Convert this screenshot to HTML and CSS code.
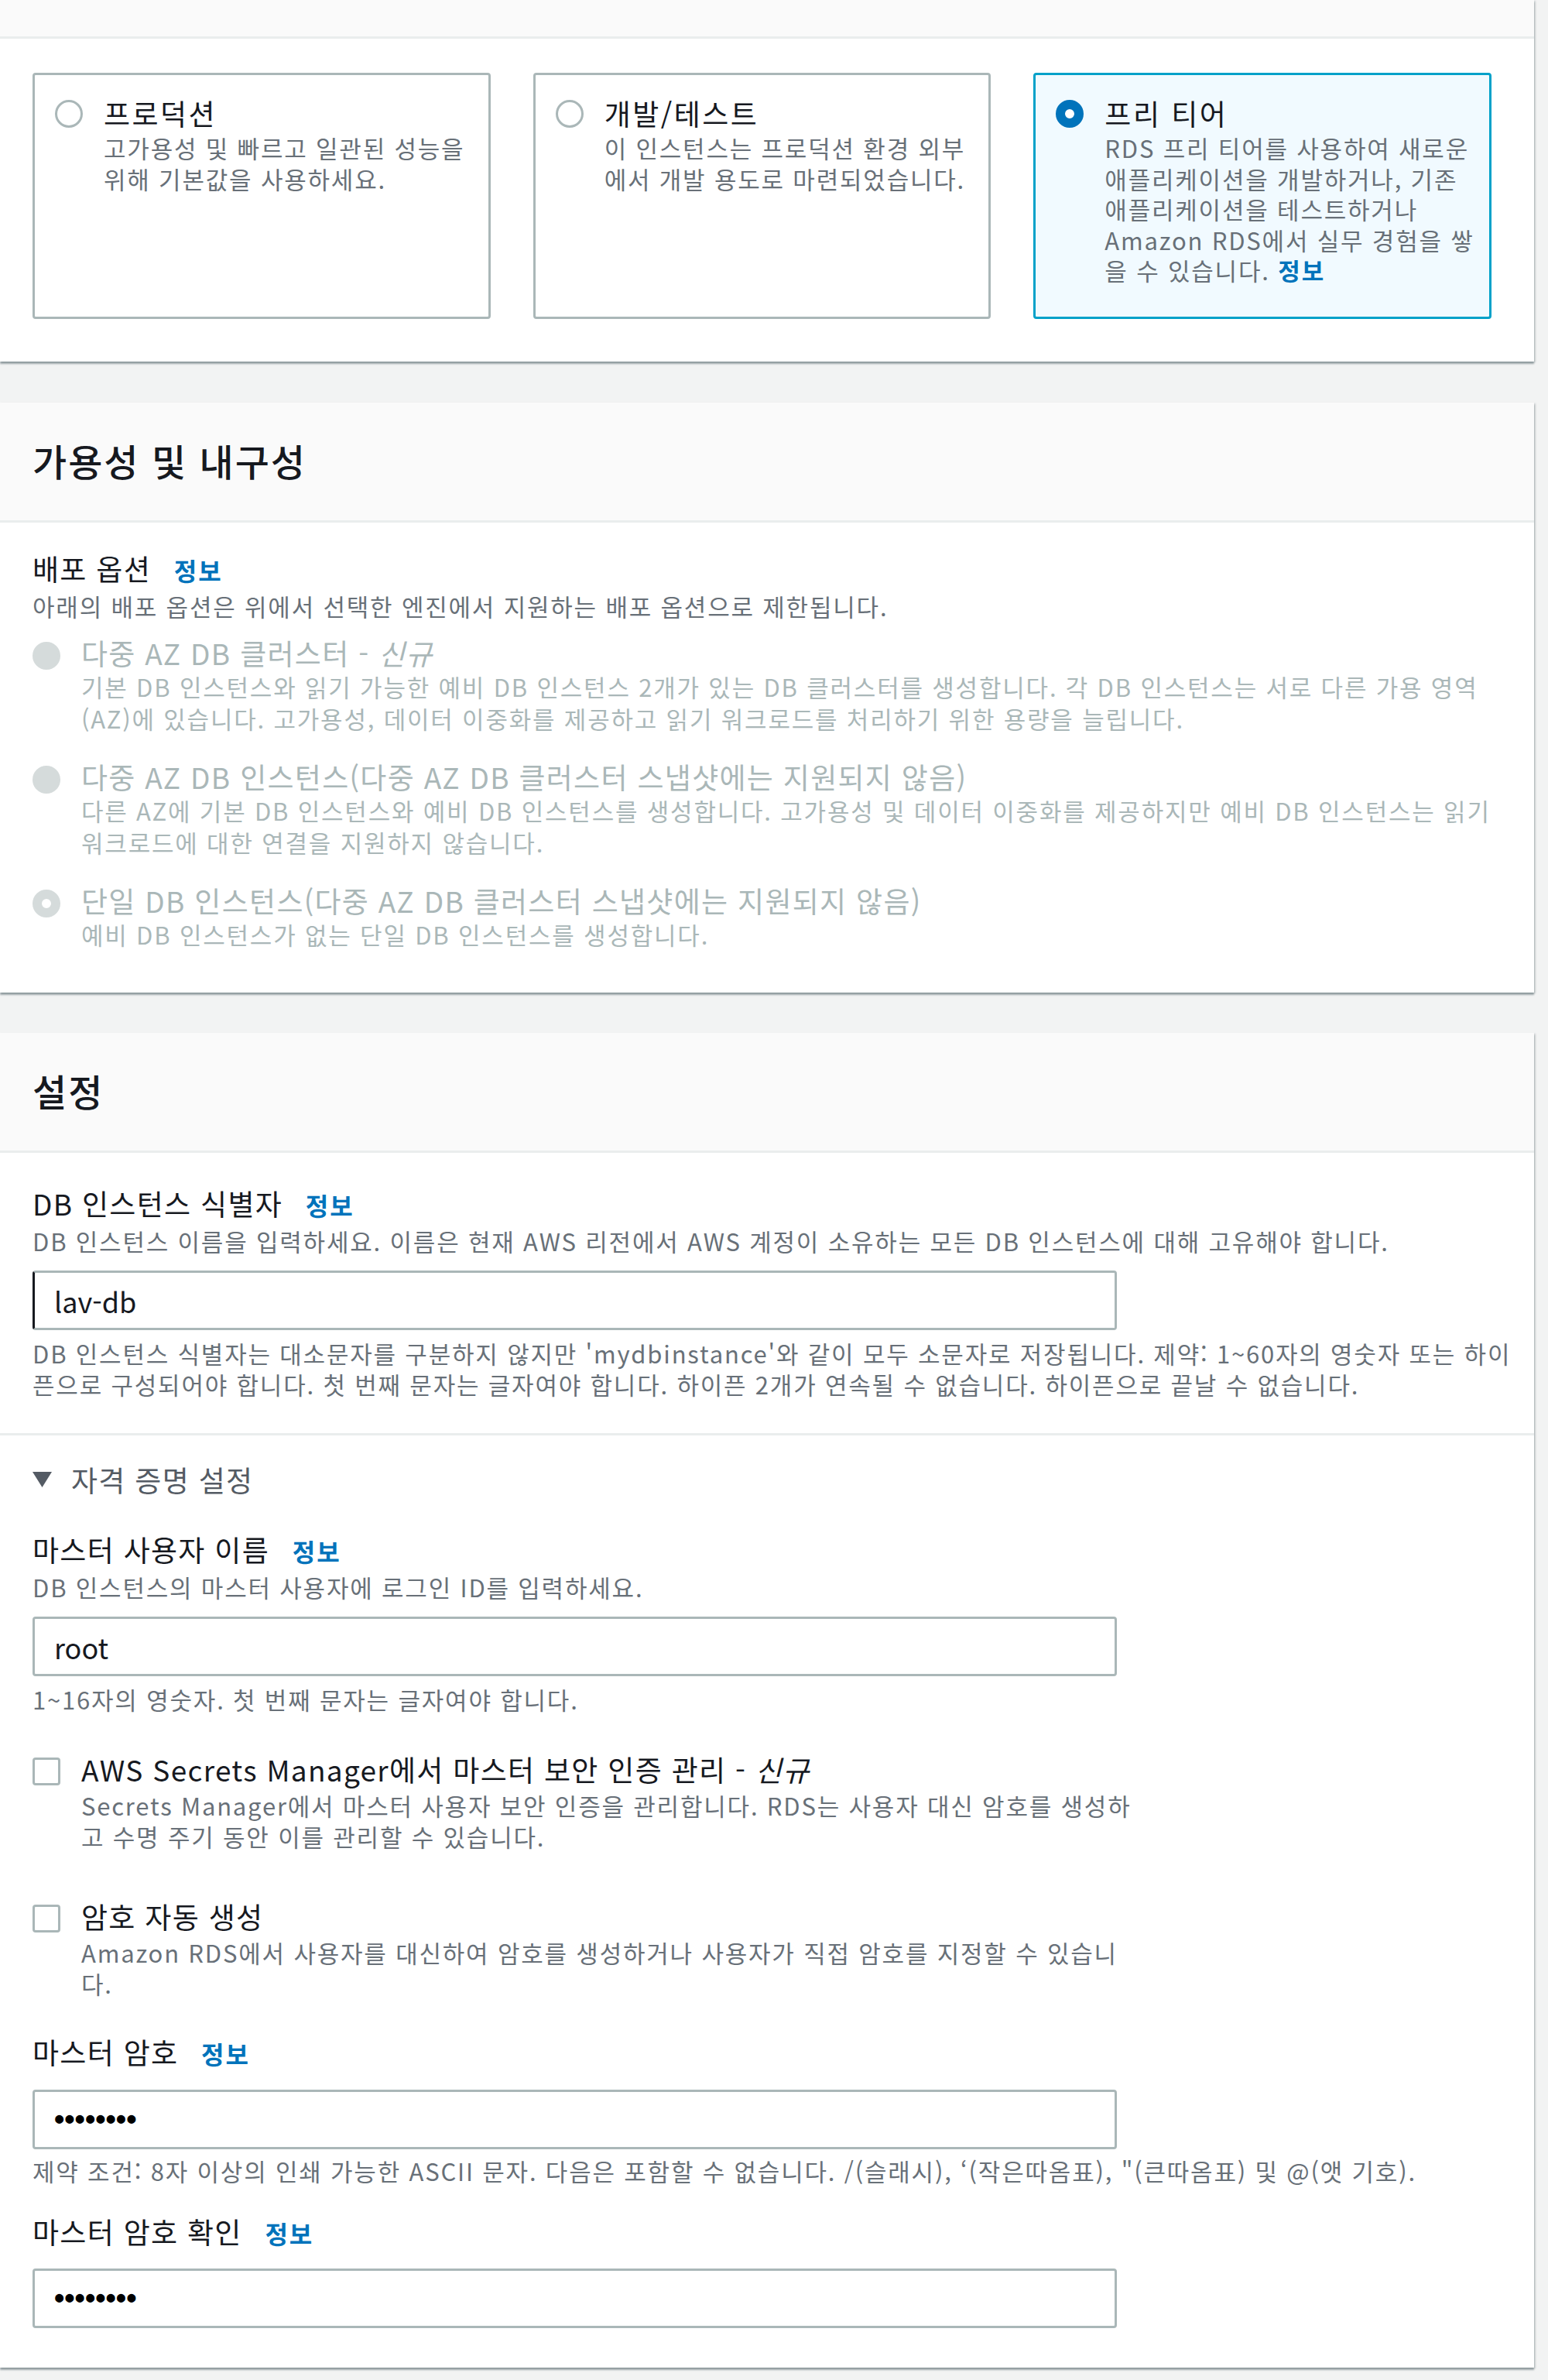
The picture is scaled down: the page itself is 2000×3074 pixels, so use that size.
FILE: index.html
```html
<!DOCTYPE html>
<html lang="ko">
<head>
  <meta charset="UTF-8" />
  <title>데이터베이스 생성</title>
  <link rel="stylesheet" href="styles.css">
</head>
<body>
<div class="page">

  <!-- 템플릿 -->
  <section class="panel">
    <div class="panel-head cut"></div>
    <div class="panel-body first">
      <div class="tiles">
        <label class="tile">
          <span class="radio"></span>
          <span class="tile-text">
            <span class="tile-title">프로덕션</span>
            <span class="desc nowrap">고가용성 및 빠르고 일관된 성능을<br>위해 기본값을 사용하세요.</span>
          </span>
        </label>
        <label class="tile">
          <span class="radio"></span>
          <span class="tile-text">
            <span class="tile-title">개발/테스트</span>
            <span class="desc nowrap">이 인스턴스는 프로덕션 환경 외부<br>에서 개발 용도로 마련되었습니다.</span>
          </span>
        </label>
        <label class="tile selected">
          <span class="radio checked"></span>
          <span class="tile-text">
            <span class="tile-title">프리 티어</span>
            <span class="desc nowrap">RDS 프리 티어를 사용하여 새로운<br>애플리케이션을 개발하거나, 기존<br>애플리케이션을 테스트하거나<br>Amazon RDS에서 실무 경험을 쌓<br>을 수 있습니다. <a class="info" href="#">정보</a></span>
          </span>
        </label>
      </div>
    </div>
  </section>

  <!-- 가용성 및 내구성 -->
  <section class="panel">
    <div class="panel-head"><h2>가용성 및 내구성</h2></div>
    <div class="panel-body second">
      <div class="field-label">배포 옵션 <a class="info" href="#">정보</a></div>
      <div class="desc gap-desc">아래의 배포 옵션은 위에서 선택한 엔진에서 지원하는 배포 옵션으로 제한됩니다.</div>

      <div class="options">
        <div class="option disabled">
          <span class="radio off"></span>
          <div>
            <div class="opt-label">다중 AZ DB 클러스터 - <i>신규</i></div>
            <div class="desc opt-desc nowrap">기본 DB 인스턴스와 읽기 가능한 예비 DB 인스턴스 2개가 있는 DB 클러스터를 생성합니다. 각 DB 인스턴스는 서로 다른 가용 영역<br>(AZ)에 있습니다. 고가용성, 데이터 이중화를 제공하고 읽기 워크로드를 처리하기 위한 용량을 늘립니다.</div>
          </div>
        </div>
        <div class="option disabled">
          <span class="radio off"></span>
          <div>
            <div class="opt-label">다중 AZ DB 인스턴스(다중 AZ DB 클러스터 스냅샷에는 지원되지 않음)</div>
            <div class="desc opt-desc nowrap">다른 AZ에 기본 DB 인스턴스와 예비 DB 인스턴스를 생성합니다. 고가용성 및 데이터 이중화를 제공하지만 예비 DB 인스턴스는 읽기<br>워크로드에 대한 연결을 지원하지 않습니다.</div>
          </div>
        </div>
        <div class="option disabled">
          <span class="radio off-checked"></span>
          <div>
            <div class="opt-label">단일 DB 인스턴스(다중 AZ DB 클러스터 스냅샷에는 지원되지 않음)</div>
            <div class="desc opt-desc">예비 DB 인스턴스가 없는 단일 DB 인스턴스를 생성합니다.</div>
          </div>
        </div>
      </div>
    </div>
  </section>

  <!-- 설정 -->
  <section class="panel last">
    <div class="panel-head"><h2>설정</h2></div>
    <div class="panel-body third">
      <div class="field-label">DB 인스턴스 식별자 <a class="info" href="#">정보</a></div>
      <div class="desc gap-desc">DB 인스턴스 이름을 입력하세요. 이름은 현재 AWS 리전에서 AWS 계정이 소유하는 모든 DB 인스턴스에 대해 고유해야 합니다.</div>
      <input class="text-input focused after-desc" type="text" value="lav-db">
      <div class="desc hint nowrap">DB 인스턴스 식별자는 대소문자를 구분하지 않지만 'mydbinstance'와 같이 모두 소문자로 저장됩니다. 제약: 1~60자의 영숫자 또는 하이<br>픈으로 구성되어야 합니다. 첫 번째 문자는 글자여야 합니다. 하이픈 2개가 연속될 수 없습니다. 하이픈으로 끝날 수 없습니다.</div>

      <hr class="divider">

      <div class="expand-head">
        <svg class="caret" width="25" height="20" viewBox="0 0 25 20"><polygon points="0,0 25,0 12.5,20" fill="#545b64"/></svg>
        <span>자격 증명 설정</span>
      </div>

      <div class="field-label user-label">마스터 사용자 이름 <a class="info" href="#">정보</a></div>
      <div class="desc gap-desc">DB 인스턴스의 마스터 사용자에 로그인 ID를 입력하세요.</div>
      <input class="text-input after-desc" type="text" value="root">
      <div class="desc hint user-hint">1~16자의 영숫자. 첫 번째 문자는 글자여야 합니다.</div>

      <div class="check-row secrets">
        <span class="checkbox"></span>
        <div>
          <div class="opt-label">AWS Secrets Manager에서 마스터 보안 인증 관리 - <i>신규</i></div>
          <div class="desc gap-desc nowrap">Secrets Manager에서 마스터 사용자 보안 인증을 관리합니다. RDS는 사용자 대신 암호를 생성하<br>고 수명 주기 동안 이를 관리할 수 있습니다.</div>
        </div>
      </div>
      <div class="check-row autogen">
        <span class="checkbox"></span>
        <div>
          <div class="opt-label">암호 자동 생성</div>
          <div class="desc gap-desc nowrap">Amazon RDS에서 사용자를 대신하여 암호를 생성하거나 사용자가 직접 암호를 지정할 수 있습니<br>다.</div>
        </div>
      </div>

      <div class="field-label pw-label">마스터 암호 <a class="info" href="#">정보</a></div>
      <input class="text-input pw after-label" type="password" value="12345678">
      <div class="desc hint pw-hint">제약 조건: 8자 이상의 인쇄 가능한 ASCII 문자. 다음은 포함할 수 없습니다. /(슬래시), ‘(작은따옴표), "(큰따옴표) 및 @(앳 기호).</div>

      <div class="field-label confirm-label">마스터 암호 확인 <a class="info" href="#">정보</a></div>
      <input class="text-input pw confirm" type="password" value="12345678">
    </div>
  </section>

</div>
</body>
</html>
```

FILE: styles.css
```css
body {
  margin: 0;
  background: #f2f3f3;
  font-family: "Noto Sans CJK KR", "Noto Sans", sans-serif;
  color: #16191f;
}

.page {
  padding: 0 18px 15px 0;
}

/* 패널 */
.panel {
  background: #fff;
  box-shadow: 0 3px 2px rgba(0, 28, 36, 0.35), 2px 1px 2px rgba(0, 28, 36, 0.15);
  margin-bottom: 52px;
}
.panel:first-child {
  margin-bottom: 53px;
}
.panel.last {
  margin-bottom: 0;
}
.panel-head {
  background: #fafafa;
  border-bottom: 3px solid #eaeded;
  height: 152px;
  padding-left: 42px;
  display: flex;
  align-items: center;
}
.panel-head.cut {
  height: 47px;
}
.panel-head h2 {
  margin: 0;
  font-size: 48px;
  font-weight: 500;
  line-height: 56px;
  letter-spacing: 2px;
  position: relative;
  top: -2px;
}
.panel-body {
  padding: 40px 55px 55px 42px;
}
.panel-body.first {
  padding-top: 44px;
}
.panel-body.second {
  padding-top: 36px;
  padding-bottom: 55px;
}
.panel-body.third {
  padding-top: 42px;
  padding-bottom: 51px;
}

/* 텍스트 */
.desc {
  display: block;
  font-size: 31px;
  line-height: 40px;
  letter-spacing: 1.8px;
  color: #687078;
}
.nowrap {
  white-space: nowrap;
}
.gap-desc {
  margin-top: 4px;
}
.info {
  color: #0073bb;
  font-weight: 700;
  font-size: 32px;
  letter-spacing: 2px;
  text-decoration: none;
  margin-left: 18px;
}
.desc .info {
  margin-left: 0;
  font-size: 31px;
}
.field-label {
  font-size: 37px;
  line-height: 46px;
  letter-spacing: 1.3px;
}

/* 타일 */
.tiles {
  display: flex;
  gap: 55px;
}
.tile {
  flex: 1;
  height: 318px;
  box-sizing: border-box;
  border: 3px solid #aab7b8;
  border-radius: 4px;
  padding: 26px 16px 0 26px;
  display: flex;
  gap: 27px;
}
.tile.selected {
  border-color: #00a1c9;
  background: #f1faff;
}
.tile-text {
  display: block;
}
.tile-title {
  display: block;
  font-size: 37px;
  line-height: 46px;
  letter-spacing: 2.5px;
}
.tile .desc {
  margin-top: 2px;
  line-height: 39.5px;
}
.tile .radio {
  margin-top: 6px;
}

/* 라디오 / 체크박스 */
.radio {
  flex: none;
  width: 36px;
  height: 36px;
  box-sizing: border-box;
  border-radius: 50%;
  border: 3px solid #aab7b8;
  background: #fff;
}
.radio.checked {
  border: 12px solid #0073bb;
}
.radio.off {
  border-color: #d5dbdb;
  background: #d5dbdb;
}
.radio.off-checked {
  border: 12px solid #d5dbdb;
}
.checkbox {
  flex: none;
  width: 36px;
  height: 36px;
  box-sizing: border-box;
  border: 3px solid #aab7b8;
  border-radius: 4px;
  background: #fff;
  margin-top: 8px;
}

/* 배포 옵션 */
.options {
  margin-top: 17px;
  display: flex;
  flex-direction: column;
  gap: 32px;
}
.option,
.check-row {
  display: flex;
  gap: 27px;
}
.option .radio {
  margin-top: 9px;
}
.opt-label {
  font-size: 37px;
  line-height: 46px;
  letter-spacing: 1.3px;
}
.opt-desc {
  margin-top: 0;
  line-height: 41px;
}
.option.disabled .opt-label,
.option.disabled .desc {
  color: #aab7b8;
}

/* 입력 */
.text-input {
  display: block;
  width: 1401px;
  height: 77px;
  box-sizing: border-box;
  border: 3px solid #aab7b8;
  border-radius: 4px;
  padding: 0 25px;
  font-family: "Noto Sans CJK KR", "Noto Sans", sans-serif;
  font-size: 36px;
  color: #16191f;
  background: #fff;
  outline: none;
}
.text-input.focused {
  border-left-color: #16191f;
}
.text-input.pw {
  font-family: "Liberation Sans", Arial, sans-serif;
  font-size: 38px;
  font-weight: 700;
  color: #000;
}
.after-desc {
  margin-top: 18px;
}
.after-label {
  margin-top: 24px;
}
.confirm {
  margin-top: 23px;
}
.hint {
  margin-top: 10px;
}
.user-hint {
  margin-top: 10px;
}
.pw-hint {
  margin-top: 8px;
}

.divider {
  border: 0;
  border-top: 3px solid #eaeded;
  margin: 43px -55px 0 -42px;
}

.expand-head {
  margin-top: 34px;
  display: flex;
  align-items: center;
  gap: 25px;
  font-size: 37px;
  line-height: 46px;
  letter-spacing: 1.3px;
  color: #545b64;
}
.user-label {
  margin-top: 44px;
}
.check-row.secrets {
  margin-top: 47px;
}
.check-row.autogen {
  margin-top: 60px;
}
.pw-label {
  margin-top: 45px;
}
.confirm-label {
  margin-top: 35px;
}
```
